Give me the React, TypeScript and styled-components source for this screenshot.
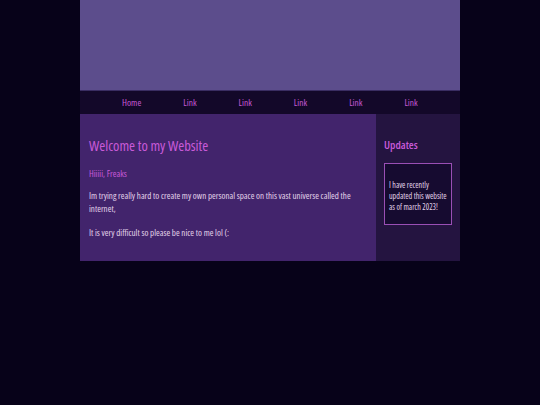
import styled, { createGlobalStyle } from "styled-components";

const GlobalStyle = createGlobalStyle`
  html, body {
    margin: 0;
    padding: 0;
    background: #070219;
  }
  body {
    font-family: "Open Sans", "Roboto Condensed", sans-serif;
    font-stretch: 75%;
  }
`;

const links = ["Home", "Link", "Link", "Link", "Link", "Link"];

const App = () => {
  return (
    <>
      <GlobalStyle />
      <Page>
        <Header />
        <Nav>
          {links.map((l, i) => (
            <NavLink key={i} href="#">{l}</NavLink>
          ))}
        </Nav>
        <Main>
          <Content>
            <Title>Welcome to my Website</Title>
            <SubTitle>Hiiiii, Freaks</SubTitle>
            <Text>
              Im trying really hard to create my own personal space on this vast universe called the internet,
            </Text>
            <Text>It is very difficult so please be nice to me lol (:</Text>
          </Content>
          <Sidebar>
            <SideTitle>Updates</SideTitle>
            <UpdateBox>I have recently updated this website as of march 2023!</UpdateBox>
          </Sidebar>
        </Main>
      </Page>
    </>
  );
};

const Page = styled.div`
  width: 380px;
  margin: 0 auto;
`;

const Header = styled.div`
  height: 90px;
  background: #5c4d8c;
  border-bottom: 1px solid #3a2d62;
`;

const Nav = styled.nav`
  height: 23px;
  background: #130829;
  display: flex;
  align-items: center;
  gap: 42px;
  padding-left: 42px;
`;

const NavLink = styled.a`
  color: #c659d6;
  font-size: 9.4px;
  font-weight: 500;
  text-decoration: none;
`;

const Main = styled.div`
  display: flex;
  height: 147px;
`;

const Content = styled.div`
  flex: 1;
  background: #42246c;
  padding: 22px 9px 0;
`;

const Title = styled.h1`
  margin: 0 0 12px;
  color: #c95ad9;
  font-size: 14.4px;
  line-height: 20px;
  font-weight: 500;
`;

const SubTitle = styled.h2`
  margin: 0 0 9px;
  color: #c95ad9;
  font-size: 9px;
  line-height: 12px;
  font-weight: 500;
`;

const Text = styled.p`
  margin: 0 0 10.5px;
  color: #e2d3ea;
  font-size: 9px;
  line-height: 13px;
`;

const Sidebar = styled.div`
  width: 68px;
  background: #241440;
  padding: 23px 8px 0;
`;

const SideTitle = styled.h3`
  margin: 0 0 10px;
  color: #c95ad9;
  font-size: 11.2px;
  line-height: 16px;
  font-weight: 600;
`;

const UpdateBox = styled.div`
  border: 1px solid #9a4fb5;
  background: #160b30;
  color: #e2d3ea;
  font-size: 8px;
  line-height: 11px;
  padding: 15px 4px 12px;
`;

export default App;
